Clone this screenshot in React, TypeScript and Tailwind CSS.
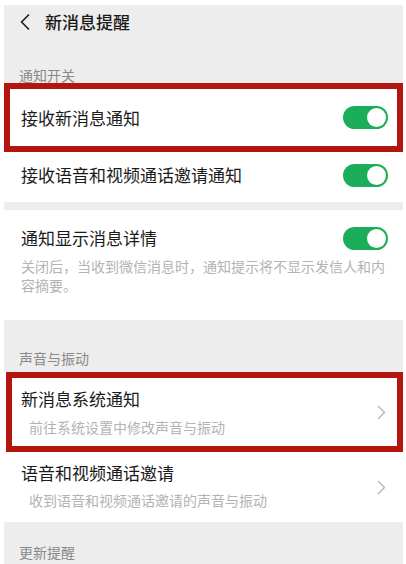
import React from "react";

const font = { fontFamily: '"Noto Sans CJK SC", "Noto Sans", sans-serif' };

function Toggle() {
  return (
    <div className="relative w-[45px] h-[23px] rounded-full bg-[#1cad5a] shrink-0">
      <div className="absolute right-[2px] top-[2px] w-[19px] h-[19px] rounded-full bg-white" />
    </div>
  );
}

function Chevron() {
  return (
    <svg width="9" height="15" viewBox="0 0 9 15" className="shrink-0">
      <polyline points="1.5,1.5 7.5,7.5 1.5,13.5" fill="none" stroke="#b5b5b5" strokeWidth="1.4" strokeLinecap="round" strokeLinejoin="round" />
    </svg>
  );
}

export default function App() {
  return (
    <div className="w-[406px] h-[564px] overflow-hidden bg-white pt-[5px] pl-[4px] pr-[3px]" style={font}>
      <div className="bg-[#ededed] h-full flex flex-col">
        {/* header */}
        <div className="h-[34px] flex items-center pl-[16px] shrink-0">
          <svg width="10" height="16" viewBox="0 0 10 16" className="shrink-0">
            <polyline points="8.5,1 1.5,8 8.5,15" fill="none" stroke="#222" strokeWidth="1.7" strokeLinecap="round" strokeLinejoin="round" />
          </svg>
          <span className="ml-[15px] text-[17px] leading-[24px] text-[#1a1a1a] font-medium">新消息提醒</span>
        </div>

        {/* section label */}
        <div className="h-[44px] flex items-end pl-[15px] shrink-0">
          <span className="text-[14px] leading-[16px] text-[#8a8a8a]">通知开关</span>
        </div>

        {/* red box row 1 */}
        <div className="h-[69px] border-[6px] border-[#b3160e] bg-white flex items-center justify-between pl-[11px] pr-[9px] shrink-0">
          <span className="text-[17px] leading-[24px] text-[#1a1a1a]">接收新消息通知</span>
          <Toggle />
        </div>

        {/* row 2 */}
        <div className="h-[50px] bg-white flex items-center justify-between pl-[17px] pr-[15px] pb-[4px] shrink-0">
          <span className="text-[17px] leading-[24px] text-[#1a1a1a]">接收语音和视频通话邀请通知</span>
          <Toggle />
        </div>

        <div className="h-[8px] shrink-0" />

        {/* row 3 */}
        <div className="h-[110px] bg-white pl-[17px] pr-[15px] pt-[16px] shrink-0">
          <div className="flex items-center justify-between">
            <span className="text-[17px] leading-[24px] text-[#1a1a1a]">通知显示消息详情</span>
            <Toggle />
          </div>
          <p className="mt-[7px] text-[14px] leading-[19px] text-[#b3b3b3]">
            关闭后，当收到微信消息时，通知提示将不显示发信人和内容摘要。
          </p>
        </div>

        {/* section label 2 */}
        <div className="h-[52px] flex items-end pl-[15px] pb-[6px] shrink-0">
          <span className="text-[14px] leading-[16px] text-[#8a8a8a]">声音与振动</span>
        </div>

        {/* red box 2 */}
        <div className="h-[80px] bg-white shrink-0 pl-[2px]">
          <div className="h-full border-[6px] border-[#b3160e] flex items-center justify-between pl-[9px] pr-[11px]">
            <div className="flex flex-col">
              <span className="text-[17px] leading-[24px] text-[#1a1a1a]">新消息系统通知</span>
              <span className="mt-[6px] pl-[8px] text-[14px] leading-[20px] text-[#b3b3b3]">前往系统设置中修改声音与振动</span>
            </div>
            <Chevron />
          </div>
        </div>

        {/* last row */}
        <div className="h-[70px] bg-white flex items-center justify-between pl-[17px] pr-[17px] shrink-0">
          <div className="flex flex-col mb-[3px]">
            <span className="text-[17px] leading-[24px] text-[#1a1a1a]">语音和视频通话邀请</span>
            <span className="mt-[5px] pl-[8px] text-[14px] leading-[20px] text-[#b3b3b3]">收到语音和视频通话邀请的声音与振动</span>
          </div>
          <Chevron />
        </div>

        {/* section label 3 */}
        <div className="pt-[22px] pl-[15px] shrink-0 text-[14px] leading-[16px] text-[#8a8a8a]">更新提醒</div>
      </div>
    </div>
  );
}
